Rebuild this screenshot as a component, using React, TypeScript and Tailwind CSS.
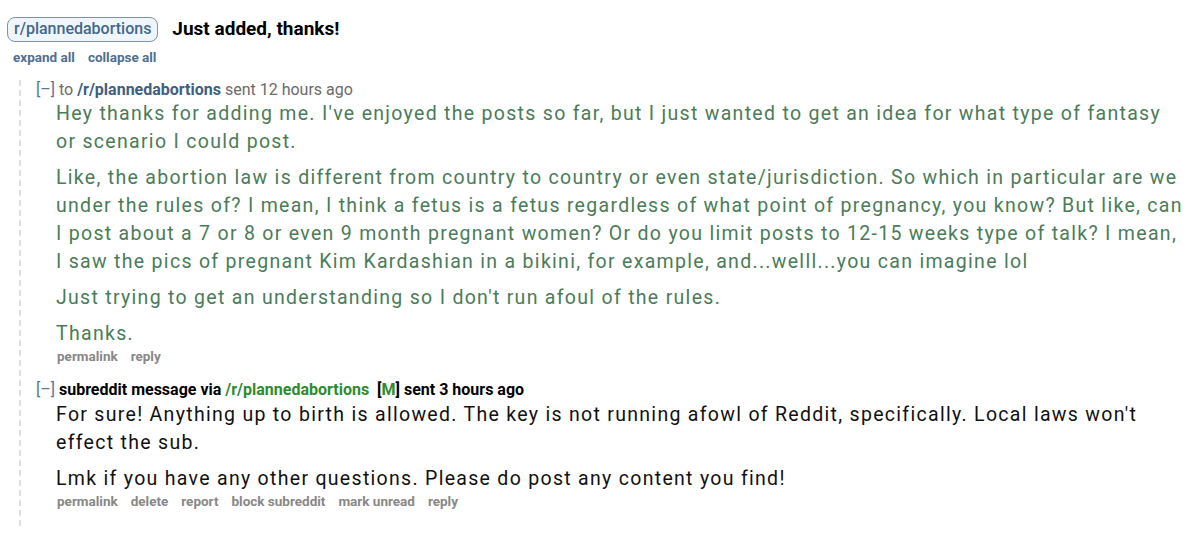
const body = "pl-[20px] text-[19.5px] leading-[28px] tracking-[1.3px] flex flex-col gap-[8px]";

function Links({ items }: { items: string[] }) {
  return (
    <div className="flex gap-[13px] pl-[21px] text-[13.5px] font-bold text-[#888888] leading-[16px]">
      {items.map((i) => (
        <span key={i}>{i}</span>
      ))}
    </div>
  );
}

export default function App() {
  return (
    <div
      className="w-[1200px] h-[551px] bg-white overflow-hidden"
      style={{ fontFamily: "Roboto, 'Noto Sans', sans-serif" }}
    >
      <div className="pt-[15px] pl-[7px] flex items-center gap-[14px]">
        <span className="rounded-[8px] border border-[#7f93a6] bg-[#eef6fb] px-[6px] h-[25px] flex items-center text-[16px] font-medium text-[#44678a]">
          r/plannedabortions
        </span>
        <span className="text-[19px] font-bold text-black">Just added, thanks!</span>
      </div>
      <div className="pl-[13px] mt-[5px] flex gap-[13px] text-[13.5px] font-bold text-[#4f6f8f] leading-[16px]">
        <span>expand all</span>
        <span>collapse all</span>
      </div>

      <div className="ml-[19px] mt-[15px] border-l-2 border-dashed border-[#e0e0e0] pl-[15px] pb-[17px] w-[1166px]">
        <div className="text-[16px] leading-[20px] text-[#6b6b6b]">
          <span className="text-[#5a7690]">[–]</span> to{" "}
          <span className="font-bold text-[#3f5f80]">/r/plannedabortions</span> sent 12 hours ago
        </div>
        <div className={`${body} text-[#4a7c59]`}>
          <p>
            Hey thanks for adding me. I've enjoyed the posts so far, but I just wanted to get an idea for what type of fantasy or scenario I could post.
          </p>
          <p>
            Like, the abortion law is different from country to country or even state/jurisdiction. So which in particular are we under the rules of? I mean, I think a fetus is a fetus regardless of what point of pregnancy, you know? But like, can I post about a 7 or 8 or even 9 month pregnant women? Or do you limit posts to 12-15 weeks type of talk? I mean, I saw the pics of pregnant Kim Kardashian in a bikini, for example, and...welll...you can imagine lol
          </p>
          <p>Just trying to get an understanding so I don't run afoul of the rules.</p>
          <p>Thanks.</p>
        </div>
        <Links items={["permalink", "reply"]} />

        <div className="mt-[16px] text-[16px] leading-[20px] font-bold text-black">
          <span className="font-normal text-[#5a7690]">[–]</span> subreddit message via{" "}
          <span className="text-[#2e8b2e]">/r/plannedabortions</span>
          <span className="ml-[8px]">
            [<span className="text-[#2e8b2e]">M</span>]
          </span>{" "}
          sent 3 hours ago
        </div>
        <div className={`${body} text-[#111111] mt-[1px]`}>
          <p>
            For sure! Anything up to birth is allowed. The key is not running afowl of Reddit, specifically. Local laws won't effect the sub.
          </p>
          <p>Lmk if you have any other questions. Please do post any content you find!</p>
        </div>
        <Links items={["permalink", "delete", "report", "block subreddit", "mark unread", "reply"]} />
      </div>
    </div>
  );
}
